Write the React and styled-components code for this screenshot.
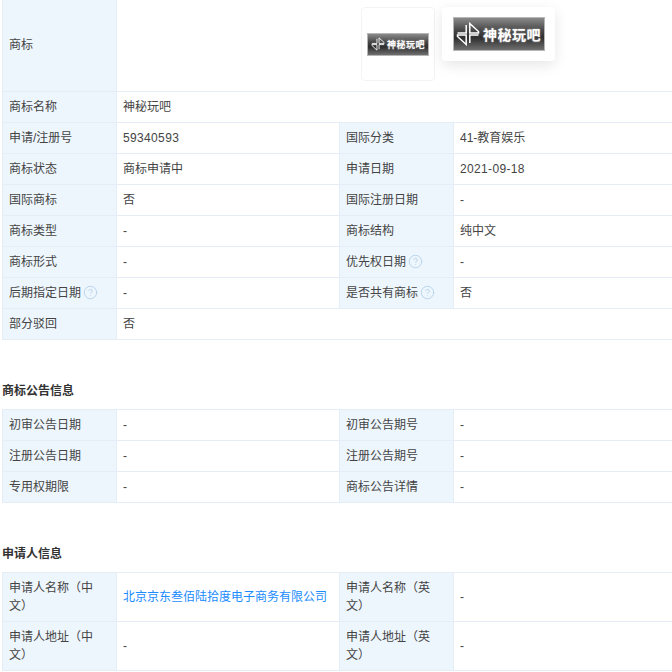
import React from 'react'
import styled, { createGlobalStyle } from 'styled-components'
import { CircleHelp } from 'lucide-react'

const Global = createGlobalStyle`
  html, body {
    margin: 0;
    padding: 0;
    background: #fff;
    overflow: hidden;
  }
  body {
    font-family: "Liberation Sans", "Noto Sans CJK SC", sans-serif;
    font-size: 12px;
    color: #333;
  }
`

const Page = styled.div`
  width: 672px;
  height: 672px;
  overflow: hidden;
  padding-left: 2px;
  box-sizing: border-box;
`

const Table = styled.table`
  width: 670px;
  table-layout: fixed;
  border-collapse: collapse;
`

const Label = styled.td`
  background: #eef6fd;
  border: 1px solid #e5eef6;
  border-top-width: ${p => p.$open ? 0 : 1}px;
  padding: 0 6px ${p => p.$open ? 2 : 0}px;
  height: ${p => p.$h || 31}px;
  line-height: 18px;
  color: #444;
  box-sizing: border-box;
`

const Value = styled.td`
  border: 1px solid #e5eef6;
  border-top-width: ${p => p.$open ? 0 : 1}px;
  border-right: 0;
  padding: 0 6px;
  height: ${p => p.$h || 31}px;
  line-height: 18px;
  letter-spacing: ${p => p.$num ? '0.35px' : '0'};
  color: #444;
  box-sizing: border-box;
`

const LogoCell = styled(Value)`
  && {
    padding: 0 0 0 244px;
  }
`

const Link = styled.a`
  color: #1a8cff;
  text-decoration: none;
`

const Heading = styled.h3`
  margin: 0;
  padding: 42px 0 9px;
  font-size: 12px;
  line-height: 18px;
  font-weight: 700;
  color: #333;
`

const Help = styled(CircleHelp)`
  color: #bcd5ea;
  vertical-align: -3px;
  margin-left: 2px;
`

const Logos = styled.div`
  display: flex;
  align-items: flex-start;
  gap: 7px;
  height: 91px;
`

const Thumb = styled.div`
  width: 74px;
  height: 74px;
  margin-top: 7px;
  border: 1px solid #f2f3f5;
  border-radius: 4px;
  box-sizing: border-box;
  display: flex;
  align-items: center;
  justify-content: center;
  background: #fff;
`

const Preview = styled.div`
  width: 113px;
  height: 54px;
  margin-top: 7px;
  border-radius: 4px;
  background: #fff;
  box-shadow: 0 4px 14px rgba(0, 0, 0, 0.1);
  display: flex;
  align-items: center;
  justify-content: center;
`

const Plate = styled.div`
  width: ${p => p.$w}px;
  height: ${p => p.$h}px;
  background: linear-gradient(#8a8a8a, #454545 40%, #2e2e2e 62%, #707070);
  border: 1px solid #b5b5b5;
  box-sizing: border-box;
  display: flex;
  align-items: center;
  justify-content: center;
  gap: ${p => p.$gap}px;
  color: #fff;
`

const PlateText = styled.span`
  font-family: "Noto Sans CJK SC", sans-serif;
  font-weight: 700;
  font-size: ${p => p.$size}px;
  line-height: 1;
  letter-spacing: 0.5px;
  white-space: nowrap;
  text-shadow: 0 0 2px rgba(255, 255, 255, 0.6);
`

// the four split quadrants of the mark
const Mark = ({ size }) => (
  <svg width={size} height={size} viewBox="0 0 24 24" fill="none" stroke="#fff" strokeWidth="1.5">
    <path d="M13.8 1.5 22.5 9.5V11H13.8z" />
    <path d="M10.2 22.5 1.5 14.5V13H10.2z" />
    <path d="M1.5 11H10.2V3" />
    <path d="M22.5 13H13.8V21" />
  </svg>
)

const Logo = ({ w, h, mark, size, gap }) => (
  <Plate $w={w} $h={h} $gap={gap}>
    <Mark size={mark} />
    <PlateText $size={size}>神秘玩吧</PlateText>
  </Plate>
)

const Q = ({ children }) => (
  <>
    {children}
    <Help size={15} strokeWidth={1.6} />
  </>
)

const Row = ({ cells, h }) => (
  <tr>
    {cells.map((c, i) =>
      i % 2 === 0
        ? <Label key={i} $h={h}>{c}</Label>
        : <Value key={i} $h={h} $num={typeof c === 'string' && /^[\d-]{2,}$/.test(c)}>{c}</Value>
    )}
  </tr>
)

const Cols = () => (
  <colgroup>
    <col style={{ width: 114 }} />
    <col style={{ width: 223 }} />
    <col style={{ width: 114 }} />
    <col />
  </colgroup>
)

export default function App() {
  return (
    <Page>
      <Global />
      <Table>
        <Cols />
        <tbody>
          <tr>
            <Label $h={91} $open>商标</Label>
            <LogoCell colSpan={3} $h={91} $open>
              <Logos>
                <Thumb><Logo w={62} h={23} mark={14} size={9} gap={2} /></Thumb>
                <Preview><Logo w={92} h={34} mark={24} size={14} gap={3} /></Preview>
              </Logos>
            </LogoCell>
          </tr>
          <tr><Label>商标名称</Label><Value colSpan={3}>神秘玩吧</Value></tr>
          <Row cells={['申请/注册号', '59340593', '国际分类', '41-教育娱乐']} />
          <Row cells={['商标状态', '商标申请中', '申请日期', '2021-09-18']} />
          <Row cells={['国际商标', '否', '国际注册日期', '-']} />
          <Row cells={['商标类型', '-', '商标结构', '纯中文']} />
          <Row cells={['商标形式', '-', <Q>优先权日期</Q>, '-']} />
          <Row cells={[<Q>后期指定日期</Q>, '-', <Q>是否共有商标</Q>, '否']} />
          <tr><Label>部分驳回</Label><Value colSpan={3}>否</Value></tr>
        </tbody>
      </Table>

      <Heading>商标公告信息</Heading>
      <Table>
        <Cols />
        <tbody>
          <Row cells={['初审公告日期', '-', '初审公告期号', '-']} />
          <Row cells={['注册公告日期', '-', '注册公告期号', '-']} />
          <Row cells={['专用权期限', '-', '商标公告详情', '-']} />
        </tbody>
      </Table>

      <Heading>申请人信息</Heading>
      <Table>
        <Cols />
        <tbody>
          <Row h={49} cells={['申请人名称（中文）', <Link>北京京东叁佰陆拾度电子商务有限公司</Link>, '申请人名称（英文）', '-']} />
          <Row h={49} cells={['申请人地址（中文）', '-', '申请人地址（英文）', '-']} />
        </tbody>
      </Table>
    </Page>
  )
}
